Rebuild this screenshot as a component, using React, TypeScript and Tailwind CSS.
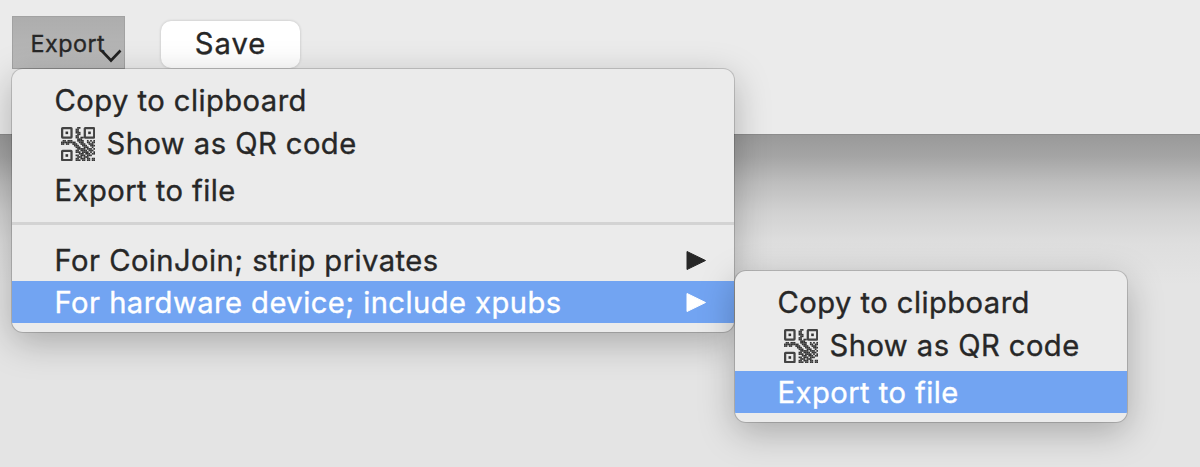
import type { ReactNode } from 'react';

const QR_ROWS = [
  '000000000011000000000',
  '000000000110000000000',
  '000000000110000000000',
  '000000000111000000000',
  '000000000011000000000',
  '000000000110000000000',
  '000000000110110000000',
  '000000000011100000000',
  '011011100011110010101',
  '111111111001110011011',
  '110110011100111001110',
  '000000001110011100111',
  '000000000111001110010',
  '000000000011111011101',
  '000000000110111101110',
  '000000000111011110101',
  '000000000001110111011',
  '000000000110111011100',
  '000000000011101110000',
  '000000000110111011011',
  '000000000111011011011',
];

const FINDERS = [
  [0, 0],
  [14, 0],
  [0, 14],
];

function QrIcon() {
  return (
    <svg className="ml-[6.5px] mr-[11.5px] h-[34px] w-[34px] shrink-0" viewBox="0 0 21 21" fill="#343434">
      {FINDERS.map(([x, y]) => (
        <g key={`${x}-${y}`}>
          <rect x={x + 0.7} y={y + 0.7} width="5.8" height="5.8" rx="0.3" fill="none" stroke="#444" strokeWidth="1.4" />
          <rect x={x + 2.8} y={y + 2.8} width="1.6" height="1.6" />
        </g>
      ))}
      {QR_ROWS.map((row, y) =>
        row.split('').map((cell, x) =>
          cell === '1' ? <rect key={`${x}-${y}`} x={x} y={y} width="1.05" height="1.05" /> : null,
        ),
      )}
    </svg>
  );
}

type ItemProps = {
  children: ReactNode;
  active?: boolean;
  submenu?: boolean;
  qr?: boolean;
};

function Item({ children, active, submenu, qr }: ItemProps) {
  return (
    <div
      className={`flex shrink-0 items-center pl-[42.6px] pr-[28px] ${qr ? 'h-[48px] pb-[2px]' : 'h-[42px] pt-px'} ${
        active ? 'bg-[#72a4f2] text-white' : ''
      }`}
    >
      {qr && <QrIcon />}
      <span className={`whitespace-nowrap ${qr ? 'pb-px' : ''}`}>{children}</span>
      {submenu && (
        <svg className="ml-auto h-[20px] w-[20px]" viewBox="0 0 20 20" fill="currentColor">
          <path d="M1 0.5 19.5 9.5 1 18.5Z" stroke="currentColor" strokeLinejoin="round" />
        </svg>
      )}
    </div>
  );
}

function CommonItems({ activeFile }: { activeFile?: boolean }) {
  return (
    <>
      <Item>Copy to clipboard</Item>
      <Item qr>Show as QR code</Item>
      <Item active={activeFile}>Export to file</Item>
    </>
  );
}

const MENU =
  'absolute flex flex-col overflow-hidden rounded-[11px] bg-[#ebebeb] pt-[10px] shadow-[0_0_0_1px_rgba(0,0,0,0.16),0_10px_36px_rgba(0,0,0,0.26)]';

export default function App() {
  return (
    <div
      className="relative flex h-[467px] w-[1200px] flex-col overflow-hidden bg-[#e4e4e4] text-[29.2px] leading-[34px] tracking-[0.44px] text-[#272727] [-webkit-text-stroke:0.35px_currentColor]"
      style={{ fontFamily: 'Inter, "Liberation Sans", sans-serif' }}
    >
      <header className="flex h-[135px] shrink-0 items-start border-b border-[#8c8c8c] bg-[#ebebeb] pl-[12px] pt-[16px]">
        <button className="relative h-[53px] w-[113px] border border-[#a2a2a2] bg-linear-to-b from-[#adadad] to-[#bababa] pl-[17.5px] text-left text-[23.3px] leading-[53px] tracking-[0.5px]">
          Export
          <svg className="absolute left-[87px] top-[32px] h-[14px] w-[22px]" viewBox="0 0 22 14" fill="none" stroke="#222" strokeWidth="2.6">
            <path d="M1.5 1.5 11 11.5 20.5 1.5" />
          </svg>
        </button>
        <button className="ml-[36px] mt-[5px] h-[47px] w-[139px] rounded-[10px] bg-white pb-[2px] leading-[44px] tracking-[1px] shadow-[0_0_3px_rgba(0,0,0,0.2)]">
          Save
        </button>
      </header>
      <div className="h-[150px] shrink-0 bg-[linear-gradient(to_bottom,#999_0,#a5a5a5_22px,#bebebe_48px,#d2d2d2_78px,#dedede_108px,#e4e4e4_150px)]" />

      <div className={`${MENU} left-[12px] top-[69px] h-[263px] w-[722px]`}>
        <CommonItems />
        <div className="flex h-[28px] shrink-0 items-center pb-[3px]">
          <div className="h-[3px] w-full bg-[#d3d3d3]" />
        </div>
        <Item submenu>For CoinJoin; strip privates</Item>
        <Item submenu active>For hardware device; include xpubs</Item>
      </div>
      <div className={`${MENU} left-[735px] top-[271px] h-[151px] w-[392px]`}>
        <CommonItems activeFile />
      </div>
    </div>
  );
}
